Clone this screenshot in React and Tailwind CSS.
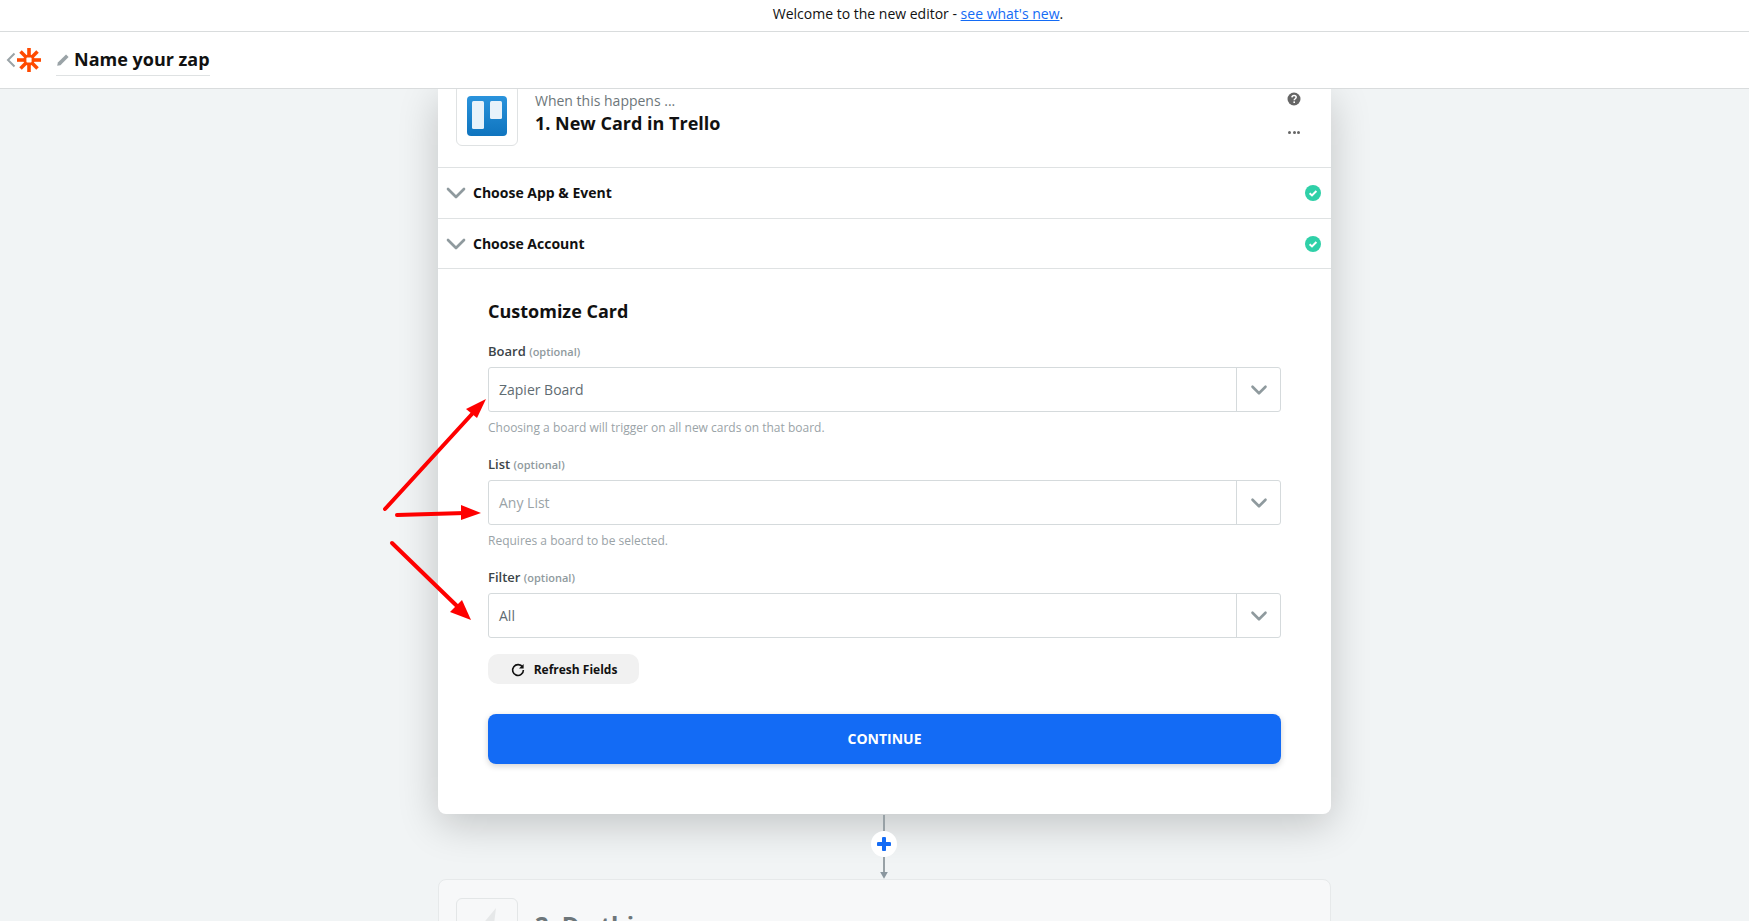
import { ChevronDown } from "lucide-react";

const font = { fontFamily: '"Open Sans", sans-serif' };

function ZapierLogo() {
  return (
    <svg width="24" height="24" viewBox="0 0 24 24" className="shrink-0">
      <g stroke="#ff4a00" strokeWidth="3.6">
        <line x1="0" y1="12" x2="24" y2="12" />
        <line x1="12" y1="0" x2="12" y2="24" />
        <line x1="3.5" y1="3.5" x2="20.5" y2="20.5" />
        <line x1="20.5" y1="3.5" x2="3.5" y2="20.5" />
      </g>
      <circle cx="12" cy="12" r="5.6" fill="#ff4a00" />
      <rect x="9.4" y="9.4" width="5.2" height="5.2" fill="#fff" rx="1" />
    </svg>
  );
}

function TrelloLogo() {
  return (
    <svg width="40" height="40" viewBox="0 0 40 40">
      <defs>
        <linearGradient id="trello" x1="0" y1="0" x2="0" y2="1">
          <stop offset="0" stopColor="#2a93dc" />
          <stop offset="1" stopColor="#0f74be" />
        </linearGradient>
      </defs>
      <rect width="40" height="40" rx="4" fill="url(#trello)" />
      <rect x="5" y="5" width="12" height="28" rx="1.5" fill="#e8f2fa" />
      <rect x="23" y="5" width="12" height="18" rx="1.5" fill="#e8f2fa" />
    </svg>
  );
}

function CheckBadge() {
  return (
    <svg width="16" height="16" viewBox="0 0 16 16">
      <circle cx="8" cy="8" r="8" fill="#2fd0a8" />
      <path d="M4.6 8.2 7 10.4 11.4 6" fill="none" stroke="#fff" strokeWidth="2" />
    </svg>
  );
}

function Row({ title, height }) {
  return (
    <div className={`flex items-center border-b border-[#dfe2e3] pl-[2px] pr-[10px] ${height}`}>
      <ChevronDown size={32} strokeWidth={2} className="text-[#8f9a9e]" />
      <div className="ml-[1px] flex-1 text-[14px] font-bold text-[#111]">{title}</div>
      <CheckBadge />
    </div>
  );
}

function Field({ label, value, valueClass, hint }) {
  return (
    <div className={hint ? "mb-[19px]" : ""}>
      <div className="mb-[7px] h-[18px] text-[13px] font-semibold leading-[18px] text-[#3b4448]">
        {label} <span className="text-[11px] text-[#8f9a9e]">(optional)</span>
      </div>
      <div className="flex h-[45px] items-stretch rounded-[3px] border border-[#d5dadc] bg-white">
        <div className={`flex flex-1 items-center pl-[10px] text-[14px] ${valueClass}`}>{value}</div>
        <div className="flex w-[44px] items-center justify-center border-l border-[#d5dadc]">
          <ChevronDown size={26} strokeWidth={2.4} className="text-[#8f9a9e]" />
        </div>
      </div>
      {hint && <div className="mt-[7px] h-[17px] text-[12px] leading-[17px] text-[#9aa3a7]">{hint}</div>}
    </div>
  );
}

function Arrows() {
  return (
    <svg className="pointer-events-none absolute left-0 top-0 z-30" width="1749" height="921">
      <g stroke="#fe0000" strokeWidth="4" strokeLinecap="round" fill="none">
        <line x1="385" y1="509" x2="472" y2="414" />
        <line x1="397" y1="515" x2="465" y2="513" />
        <line x1="392" y1="543" x2="458" y2="607" />
      </g>
      <polygon points="486,399 477,418 466,409" fill="#fe0000" />
      <polygon points="481,513 461,505 461,520" fill="#fe0000" />
      <polygon points="471,620 450,612 462,600" fill="#fe0000" />
    </svg>
  );
}

export default function App() {
  return (
    <div className="relative flex h-[921px] flex-col overflow-hidden bg-[#f1f4f5]" style={font}>
      <div className="flex h-[32px] shrink-0 items-center justify-center border-b border-[#d9dcdd] bg-white pb-[4px] pl-[87px] text-[14px] text-[#111]">
        Welcome to the new editor -&nbsp;
        <a href="#" className="text-[#136bf5] underline">see what's new</a>.
      </div>
      <div className="z-20 flex h-[57px] shrink-0 items-center border-b border-[#d9dcdd] bg-white pl-[6px]">
        <svg width="10" height="16" viewBox="0 0 10 16" className="mr-[1px]">
          <path d="M8.5 1.5 2 8l6.5 6.5" fill="none" stroke="#9aa3a7" strokeWidth="2" />
        </svg>
        <ZapierLogo />
        <div className="ml-[15px] flex h-[31px] items-center border-b border-[#dfe2e3]">
          <svg width="14" height="14" viewBox="0 0 12 12" className="mr-[4px]">
            <path d="M1 11 1.6 8.2 8.6 1.2 10.8 3.4 3.8 10.4Z" fill="#9aa3a7" />
          </svg>
          <span className="text-[18px] font-bold text-[#111]">Name your zap</span>
        </div>
      </div>

      <div className="flex flex-1 flex-col items-center overflow-hidden pl-[20px]">
        <div className="z-10 w-[893px] shrink-0 rounded-b-[8px] bg-white shadow-[0_10px_40px_rgba(0,0,0,0.2)]">
          <div className="flex h-[79px] border-b border-[#dfe2e3] pl-[18px] pr-[30px]">
            <div className="-mt-[5px] flex h-[62px] w-[62px] items-center justify-center rounded-[6px] border border-[#dfe2e3] pt-[1px]">
              <TrelloLogo />
            </div>
            <div className="ml-[17px] flex-1 pt-[2px]">
              <div className="text-[14px] leading-[20px] text-[#6d767a]">When this happens ...</div>
              <div className="-mt-[1px] text-[18px] font-bold leading-[26px] text-[#111]">1. New Card in Trello</div>
            </div>
            <div className="flex w-[14px] flex-col items-center pt-[3px]">
              <svg width="14" height="14" viewBox="0 0 14 14">
                <circle cx="7" cy="7" r="6.5" fill="#666" />
                <path d="M4.9 5.4C5 4.1 6 3.5 7.1 3.5 8.3 3.5 9.2 4.2 9.2 5.3 9.2 6.7 7.2 6.8 7.2 8.3" fill="none" stroke="#fff" strokeWidth="1.5" />
                <rect x="6.4" y="9.4" width="1.6" height="1.6" fill="#fff" />
              </svg>
              <div className="mt-[25px] flex gap-[1.5px]">
                <span className="h-[3px] w-[3px] rounded-full bg-[#666]" />
                <span className="h-[3px] w-[3px] rounded-full bg-[#666]" />
                <span className="h-[3px] w-[3px] rounded-full bg-[#666]" />
              </div>
            </div>
          </div>
          <Row title="Choose App & Event" height="h-[51px] pb-[1px]" />
          <Row title="Choose Account" height="h-[50px]" />
          <div className="px-[50px] pb-[50px] pt-[29px]">
            <div className="mb-[18px] text-[18px] font-bold leading-[26px] text-[#111]">Customize Card</div>
            <Field label="Board" value="Zapier Board" valueClass="text-[#5f6c72]" hint="Choosing a board will trigger on all new cards on that board." />
            <Field label="List" value="Any List" valueClass="text-[#9aa3a7]" hint="Requires a board to be selected." />
            <Field label="Filter" value="All" valueClass="text-[#5f6c72]" />
            <div className="mt-[16px] flex h-[30px] w-[151px] items-center justify-center gap-[9px] rounded-[10px] bg-[#f1f1f1] pl-[1px] pt-[1px]">
              <svg width="14" height="14" viewBox="0 0 14 14">
                <path d="M11.6 4.2A5.4 5.4 0 1 0 12.4 7" fill="none" stroke="#111" strokeWidth="1.6" />
                <path d="M12.6 1v4.6H8Z" fill="#111" />
              </svg>
              <span className="text-[12px] font-bold text-[#111]">Refresh Fields</span>
            </div>
            <div className="mt-[30px] flex h-[50px] items-center justify-center rounded-[8px] bg-[#136bf5] pb-[1px] text-[14px] font-bold text-white shadow-[0_2px_6px_rgba(0,0,0,0.18)]">
              CONTINUE
            </div>
          </div>
        </div>

        <div className="z-10 mr-[1px] flex h-[65px] w-[30px] shrink-0 flex-col items-center">
          <div className="mt-[1px] h-[17px] w-[2px] bg-[#98a1a6]" />
          <div className="flex h-[26px] w-[26px] shrink-0 items-center justify-center rounded-full bg-white">
            <svg width="14" height="14" viewBox="0 0 14 14">
              <path d="M7 1.5v11M1.5 7h11" stroke="#136bf5" strokeWidth="4" strokeLinecap="round" />
            </svg>
          </div>
          <div className="h-[16px] w-[2px] bg-[#98a1a6]" />
          <svg width="10" height="7" viewBox="0 0 10 7"><path d="M1 0h8L5 7Z" fill="#8a979f" /></svg>
        </div>

        <div className="z-10 w-[893px] flex-1 rounded-t-[8px] border border-[#e6e9ea] bg-[#f7f8f9] pl-[17px] pt-[18px]">
          <div className="flex">
            <div className="flex h-[62px] w-[62px] shrink-0 items-start justify-center rounded-[6px] border border-[#e3e6e7] pt-[9px]">
              <svg width="22" height="28" viewBox="0 0 22 28">
                <path d="M20 0 17 24 0 24Z" fill="#e6e8e9" />
              </svg>
            </div>
            <div className="ml-[17px] mt-[12px] text-[24px] font-bold leading-[30px] text-[#6d767a]">2. Do this ...</div>
          </div>
        </div>
      </div>
      <Arrows />
    </div>
  );
}
